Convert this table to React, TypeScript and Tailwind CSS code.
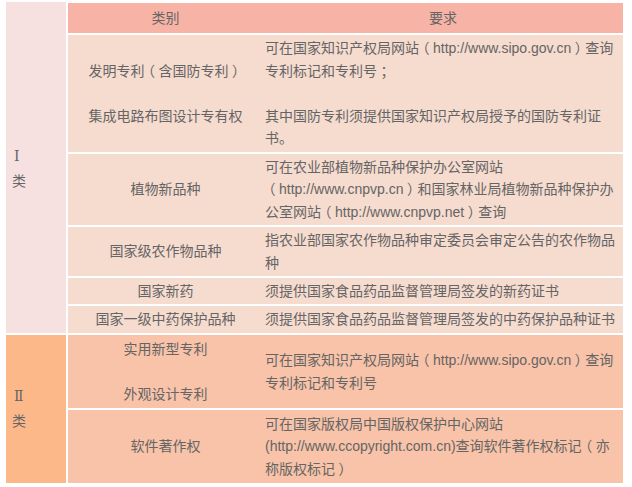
import React from "react";

const font = {
  fontFamily: '"Liberation Sans", "Noto Sans CJK SC", sans-serif',
};

function P({ children }: { children: React.ReactNode }) {
  return (
    <span className="inline-block w-[1em] text-center [font-feature-settings:'halt']">{children}</span>
  );
}

function Cat({ children, className = "" }: { children: React.ReactNode; className?: string }) {
  return (
    <div className={`flex flex-col items-center justify-center text-center whitespace-nowrap ${className}`}>
      {children}
    </div>
  );
}

function Req({ children, className = "" }: { children: React.ReactNode; className?: string }) {
  return (
    <div className={`flex flex-col justify-center pl-[2px] whitespace-nowrap ${className}`}>
      <div>{children}</div>
    </div>
  );
}

function Side({ num, className = "" }: { num: string; className?: string }) {
  return (
    <div className={`mr-[2px] flex flex-col justify-center pl-[6px] ${className}`}>
      <div className="leading-[25px] pl-[2px] text-[14px] font-['DejaVu_Serif',serif] font-light">{num}</div>
      <div className="leading-[25px]">类</div>
    </div>
  );
}

export default function App() {
  const b1 = "bg-[#f6dbcf]";
  const b2 = "bg-[#f8c3a8]";
  return (
    <div
      className="w-[632px] h-[487px] bg-white pl-[6px] pt-[3px] text-[14px] leading-[22.5px] text-[#656565]"
      style={font}
    >
      <div className="grid grid-cols-[62px_195px_360px] grid-rows-[30px_117px_71px_49px_26px_27px_73px_73px] gap-y-[2px]">
        <Side num="Ⅰ" className="row-span-6 -mt-[1px] pt-[2px] bg-[#f7e1e0]" />
        <Cat className="bg-[#f7b3a5]">类别</Cat>
        <Cat className="bg-[#f7b3a5]">要求</Cat>

        <Cat className={b1}>
          <div>
            发明专利<P>（</P>含国防专利<P>）</P>
          </div>
          <div>&nbsp;</div>
          <div>集成电路布图设计专有权</div>
        </Cat>
        <Req className={b1}>
          可在国家知识产权局网站<P>（</P>http://www.sipo.gov.cn<P>）</P>查询
          <br />
          专利标记和专利号<P>；</P>
          <br />
          &nbsp;
          <br />
          其中国防专利须提供国家知识产权局授予的国防专利证
          <br />
          书。
        </Req>

        <Cat className={b1}>植物新品种</Cat>
        <Req className={b1}>
          可在农业部植物新品种保护办公室网站
          <br />
          <P>（</P>http://www.cnpvp.cn<P>）</P>和国家林业局植物新品种保护办
          <br />
          公室网站<P>（</P>http://www.cnpvp.net<P>）</P>查询
        </Req>

        <Cat className={b1}>国家级农作物品种</Cat>
        <Req className={b1}>
          指农业部国家农作物品种审定委员会审定公告的农作物品
          <br />
          种
        </Req>

        <Cat className={b1}>国家新药</Cat>
        <Req className={b1}>须提供国家食品药品监督管理局签发的新药证书</Req>

        <Cat className={b1}>国家一级中药保护品种</Cat>
        <Req className={b1}>须提供国家食品药品监督管理局签发的中药保护品种证书</Req>

        <Side num="Ⅱ" className="row-span-2 bg-[#fdb889]" />
        <Cat className={b2}>
          <div>实用新型专利</div>
          <div>&nbsp;</div>
          <div>外观设计专利</div>
        </Cat>
        <Req className={b2}>
          可在国家知识产权局网站<P>（</P>http://www.sipo.gov.cn<P>）</P>查询
          <br />
          专利标记和专利号
        </Req>

        <Cat className={b2}>软件著作权</Cat>
        <Req className={b2}>
          可在国家版权局中国版权保护中心网站
          <br />
          (http://www.ccopyright.com.cn)查询软件著作权标记<P>（</P>亦
          <br />
          称版权标记<P>）</P>
        </Req>
      </div>
    </div>
  );
}
